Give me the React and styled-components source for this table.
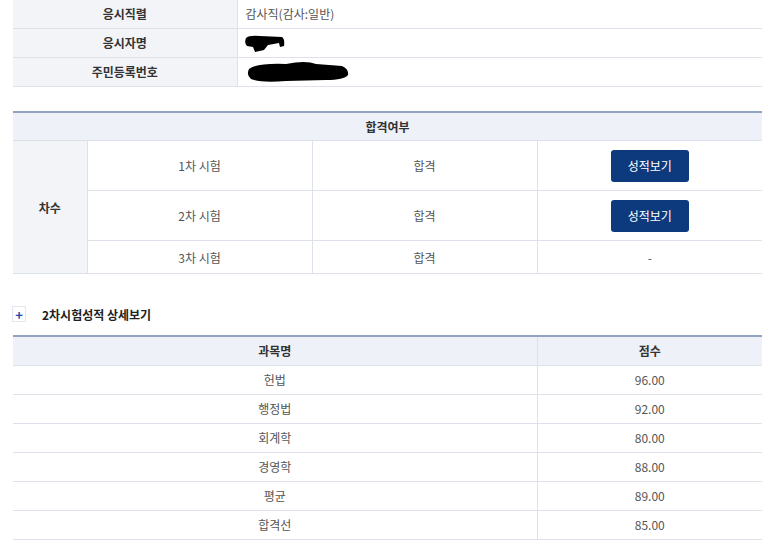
import React from 'react'
import styled, { createGlobalStyle } from 'styled-components'

const GlobalStyle = createGlobalStyle`
    body {
        margin: 0;
        background: #fff;
        font-family: "Noto Sans CJK KR", "Noto Sans", sans-serif;
        font-size: 12px;
        color: #555;
    }
`

const Page = styled.div`
    width: 749px;
    padding: 0 11px 0 13px;
`

const Table = styled.table`
    width: 100%;
    border-collapse: collapse;
    table-layout: fixed;
    border-top: ${(p) => (p.$top ? '2px solid #93a3c3' : 'none')};
    margin-bottom: ${(p) => p.$mb || 0}px;
`

const Row = styled.tr`
    height: ${(p) => p.$h}px;
`

const Head = styled.th`
    background: #eef1f7;
    color: #333;
    font-weight: 700;
    text-align: center;
    border-bottom: 1px solid #dde2ea;
    border-left: ${(p) => (p.$sep ? '1px solid #dde2ea' : 'none')};
    padding: 0;
`

const Label = styled.th`
    background: #f2f4f8;
    color: #333;
    font-weight: 700;
    text-align: center;
    border-bottom: 1px solid #dde2ea;
    border-right: 1px solid #dde2ea;
    padding: 0;
`

const Cell = styled.td`
    text-align: ${(p) => p.$align || 'center'};
    padding: 0 ${(p) => (p.$align === 'left' ? '8px' : '0')};
    border-bottom: 1px solid #dde2ea;
    border-left: ${(p) => (p.$sep ? '1px solid #dde2ea' : 'none')};
    color: #555;
    vertical-align: middle;
`

const ScoreButton = styled.button`
    width: 78px;
    height: 32px;
    border: none;
    border-radius: 3px;
    background: #0d3a7d;
    color: #fff;
    font-family: inherit;
    font-size: 12px;
    cursor: pointer;
`

const SectionTitle = styled.div`
    display: flex;
    align-items: center;
    gap: 16px;
    height: 26px;
    margin: 27px 0 8px;
    color: #222;
    font-weight: 700;
    font-size: 12px;
`

const PlusBox = styled.span`
    width: 12px;
    height: 14px;
    margin-left: -1px;
    border: 1px solid #e3e6ee;
    display: flex;
    align-items: center;
    justify-content: center;
    color: #1f4aa8;
    font-size: 13px;
    font-weight: 700;
`

const Blot = styled.svg`
    display: block;
`

const scores = [
    ['헌법', '96.00'],
    ['행정법', '92.00'],
    ['회계학', '80.00'],
    ['경영학', '88.00'],
    ['평균', '89.00'],
    ['합격선', '85.00'],
]

function App() {
    return (
        <Page>
            <GlobalStyle />
            <Table $mb={24}>
                <colgroup>
                    <col style={{ width: 224 }} />
                    <col />
                </colgroup>
                <tbody>
                    <Row $h={28}>
                        <Label>응시직렬</Label>
                        <Cell $align="left">감사직(감사:일반)</Cell>
                    </Row>
                    <Row $h={29}>
                        <Label>응시자명</Label>
                        <Cell $align="left">
                            <Blot width="42" height="20" viewBox="0 0 42 20" style={{ marginLeft: -2, marginTop: 2 }}>
                                <path d="M2 4 Q5 1 16 2 L38 3 Q41 5 40 12 L36 13 L35 9 L24 11 L20 16 L11 18 L9 13 L3 12 Q0 9 2 4Z" fill="#000" />
                            </Blot>
                        </Cell>
                    </Row>
                    <Row $h={29}>
                        <Label>주민등록번호</Label>
                        <Cell $align="left">
                            <Blot width="104" height="22" viewBox="0 0 104 22">
                                <path d="M3 8 Q10 2 40 3 Q60 -1 70 3 L96 5 Q103 8 102 14 Q98 19 80 19 L40 20 Q14 22 5 18 Q0 14 3 8Z" fill="#000" />
                            </Blot>
                        </Cell>
                    </Row>
                </tbody>
            </Table>

            <Table $top>
                <colgroup>
                    <col style={{ width: 74 }} />
                    <col />
                    <col />
                    <col />
                </colgroup>
                <tbody>
                    <Row $h={29}>
                        <Head colSpan={4}>합격여부</Head>
                    </Row>
                    <Row $h={50}>
                        <Label rowSpan={3}>차수</Label>
                        <Cell>1차 시험</Cell>
                        <Cell $sep>합격</Cell>
                        <Cell $sep><ScoreButton>성적보기</ScoreButton></Cell>
                    </Row>
                    <Row $h={50}>
                        <Cell>2차 시험</Cell>
                        <Cell $sep>합격</Cell>
                        <Cell $sep><ScoreButton>성적보기</ScoreButton></Cell>
                    </Row>
                    <Row $h={33}>
                        <Cell>3차 시험</Cell>
                        <Cell $sep>합격</Cell>
                        <Cell $sep>-</Cell>
                    </Row>
                </tbody>
            </Table>

            <SectionTitle>
                <PlusBox>+</PlusBox>
                2차시험성적 상세보기
            </SectionTitle>

            <Table $top>
                <colgroup>
                    <col style={{ width: 524 }} />
                    <col />
                </colgroup>
                <tbody>
                    <Row $h={29}>
                        <Head>과목명</Head>
                        <Head $sep>점수</Head>
                    </Row>
                    {scores.map(([name, score]) => (
                        <Row $h={29} key={name}>
                            <Cell>{name}</Cell>
                            <Cell $sep>{score}</Cell>
                        </Row>
                    ))}
                </tbody>
            </Table>
        </Page>
    )
}

export default App
